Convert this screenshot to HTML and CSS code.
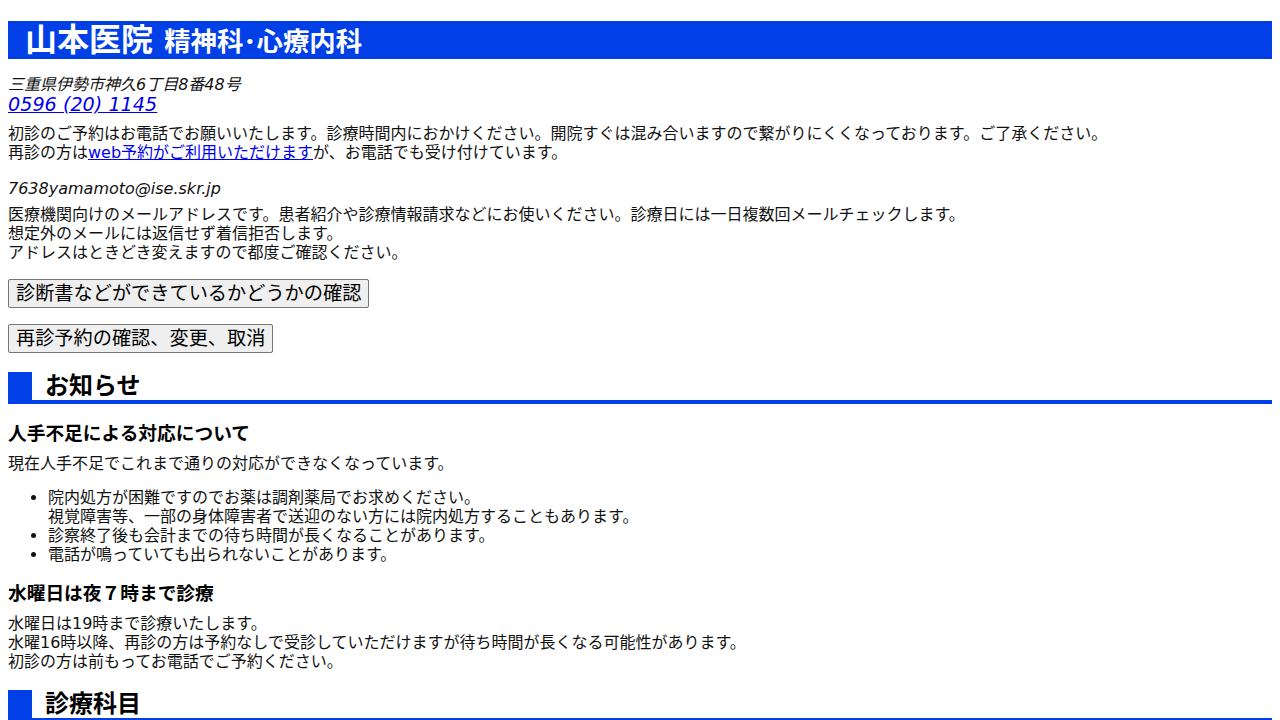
FILE: index.html
```html
<!DOCTYPE html>
<html lang="ja">
<head>
  <meta charset="UTF-8" />
  <meta name="viewport" content="width=device-width, initial-scale=1" />
  <title>山本医院 精神科･心療内科</title>
  <link rel="stylesheet" href="styles.css">
</head>
<body>
  <h1 class="site-title">山本医院 <small>精神科･心療内科</small></h1>

  <address class="contact">
    三重県伊勢市神久6丁目8番48号<br>
    <a class="tel" href="tel:0596201145">0596 (20) 1145</a>
  </address>
  <p class="note-tel">
    初診のご予約はお電話でお願いいたします。診療時間内におかけください。開院すぐは混み合いますので繋がりにくくなっております。ご了承ください。<br>
    再診の方は<a href="#">web予約がご利用いただけます</a>が、お電話でも受け付けています。
  </p>

  <address class="mail">7638yamamoto@ise.skr.jp</address>
  <p class="note-mail">
    医療機関向けのメールアドレスです。患者紹介や診療情報請求などにお使いください。診療日には一日複数回メールチェックします。<br>
    想定外のメールには返信せず着信拒否します。<br>
    アドレスはときどき変えますので都度ご確認ください。
  </p>

  <p class="btn-row"><button type="button">診断書などができているかどうかの確認</button></p>
  <p class="btn-row"><button type="button">再診予約の確認、変更、取消</button></p>

  <h2 class="section-title">お知らせ</h2>

  <h3>人手不足による対応について</h3>
  <p>現在人手不足でこれまで通りの対応ができなくなっています。</p>
  <ul>
    <li>院内処方が困難ですのでお薬は調剤薬局でお求めください。<br>視覚障害等、一部の身体障害者で送迎のない方には院内処方することもあります。</li>
    <li>診察終了後も会計までの待ち時間が長くなることがあります。</li>
    <li>電話が鳴っていても出られないことがあります。</li>
  </ul>

  <h3>水曜日は夜７時まで診療</h3>
  <p>
    水曜日は19時まで診療いたします。<br>
    水曜16時以降、再診の方は予約なしで受診していただけますが待ち時間が長くなる可能性があります。<br>
    初診の方は前もってお電話でご予約ください。
  </p>

  <h2 class="section-title">診療科目</h2>
</body>
</html>
```

FILE: styles.css
```css
body {
  margin: 8px;
  font-family: "DejaVu Sans", "Noto Sans CJK JP", sans-serif;
  font-size: 16px;
  line-height: 19px;
  color: #111;
  background: #fff;
}
a {
  color: #0000ee;
}
p {
  margin: 0;
}
.site-title {
  margin: 13px 0 0;
  padding-left: 17px;
  height: 38px;
  line-height: 38px;
  font-size: 32px;
  font-weight: bold;
  color: #fff;
  background: #0040e6;
}
.site-title small {
  font-size: 26.4px;
}
.contact {
  margin-top: 16px;
  font-style: italic;
}
.tel {
  font-size: 19.2px;
  line-height: 22px;
}
.note-tel {
  margin-top: 8px;
}
.mail {
  margin-top: 17px;
  font-style: italic;
}
.note-mail {
  margin-top: 7px;
}
.btn-row {
  margin-top: 17px;
}
.btn-row + .btn-row {
  margin-top: 16px;
}
button {
  font-family: inherit;
  font-size: 19.2px;
  line-height: 25px;
  padding: 1px 7px;
  color: #000;
  background: #efefef;
  border: 1px solid #767676;
  border-radius: 2px;
}
.section-title {
  margin: 20px 0 0;
  padding-left: 13px;
  font-size: 24px;
  line-height: 28px;
  color: #000;
  border-left: 24px solid #0040e6;
  border-bottom: 4px solid #0040e6;
}
h3 {
  margin: 19px 0 9px;
  font-size: 18.72px;
  line-height: 22px;
  color: #000;
}
ul {
  margin: 15px 0 0;
  padding-left: 40px;
}
ul + h3 {
  margin-top: 19px;
}
p + .section-title {
  margin-top: 19px;
}
```
